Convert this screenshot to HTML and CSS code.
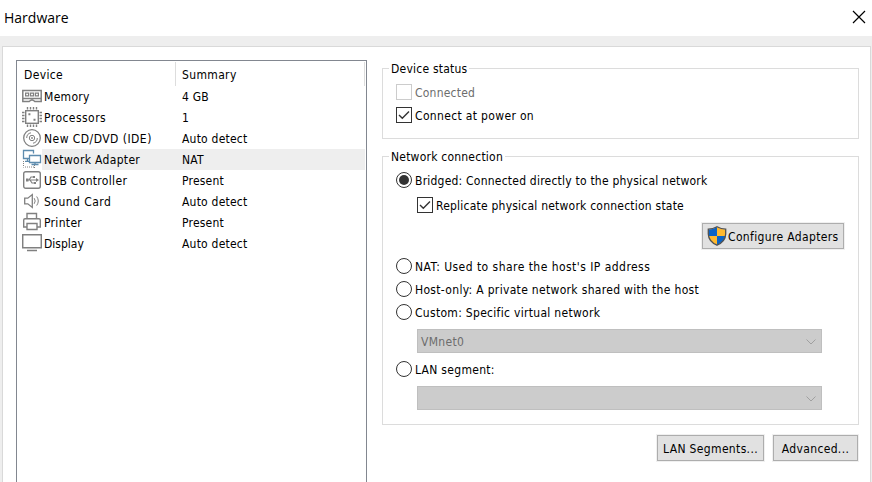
FILE: index.html
```html
<!DOCTYPE html>
<html lang="en">
<head>
<meta charset="utf-8">
<title>Hardware</title>
<link rel="stylesheet" href="styles.css">
</head>
<body>
<header class="titlebar"><h1>Hardware</h1>
<svg class="close" width="14" height="14" viewBox="0 0 14 14"><path d="M1 1l12 12M13 1L1 13"/></svg></header>
<main class="panel">
<section class="devices">
<div class="head"><span class="c1">Device</span><span class="c2">Summary</span></div>
<div class="row"><svg viewBox="0 0 20 20"><path d="M.8 4.5h18.4v11h-6.4q-2.8-3-5.6 0H.8zM1 12.5h18" stroke-width="1.5"/><path d="M3.6 7.1h3v2.8h-3zM8.5 7.1h3v2.8h-3zM13.4 7.1h3v2.8h-3z" stroke-width="1.2"/></svg><span class="name">Memory</span><span class="value">4 GB</span></div>
<div class="row"><svg viewBox="0 0 20 20"><rect x="3.7" y="3.7" width="12.6" height="12.6" stroke-width="1.4"/><path d="M5.5 0v2.5M8.5 0v2.5M11.5 0v2.5M14.5 0v2.5M5.5 17.5V20M8.5 17.5V20M11.5 17.5V20M14.5 17.5V20M0 5.5h2.5M0 8.5h2.5M0 11.5h2.5M0 14.5h2.5M17.5 5.5H20M17.5 8.5H20M17.5 11.5H20M17.5 14.5H20" stroke-width="1.4"/><path d="M6.4 7.3h2M11.5 12.7h2" stroke-width="2"/></svg><span class="name wide">Processors</span><span class="value">1</span></div>
<div class="row"><svg viewBox="0 0 20 20"><circle cx="10" cy="10" r="8.3" stroke-width="1.3"/><circle cx="10" cy="10" r="2.7"/><circle cx="10" cy="10" r=".6"/><path d="M4.7 10A5.3 5.3 0 0 1 9 4.8M15.3 10A5.3 5.3 0 0 1 11 15.2"/></svg><span class="name wide">New CD/DVD (IDE)</span><span class="value">Auto detect</span></div>
<div class="row selected"><svg viewBox="0 0 20 20"><g class="blue"><path d="M7 9.5H1.5v-8h10v3M3 12.3h4M5.5 9.5v3M7.5 6.5h11v7h-11zM9.5 15.5h7M13 13.5v2"/></g><path d="M1.5 12v6.5M3 18h9M12.5 16v3" stroke-dasharray="1 1"/></svg><span class="name">Network Adapter</span><span class="value">NAT</span></div>
<div class="row"><svg viewBox="0 0 20 20"><rect x="1.7" y="1.7" width="16.6" height="16.6" rx="2" stroke-width="1.4"/><path d="M4.5 10H15M7 10l2-3h2.5M8 10l2 3h2.5" stroke-width="1.2"/><path class="solid" d="M14 8l3 2-3 2zM4 8.5h2.5v3H4zM11 6h2v2h-2zM12 12h2v2h-2z"/></svg><span class="name">USB Controller</span><span class="value">Present</span></div>
<div class="row"><svg viewBox="0 0 20 20"><path d="M2.7 7.2h3.1l4.5-3.6v12.8l-4.5-3.6H2.7z" stroke-width="1.3"/><path d="M12.2 7.2q2 2.8 0 5.6M14.7 5.5q3.2 4.5 0 9"/></svg><span class="name wide">Sound Card</span><span class="value">Auto detect</span></div>
<div class="row"><svg viewBox="0 0 20 20"><path d="M5 6.5v-5h9.5v5M5 15H1.7V8q0-1.3 1.3-1.3h14q1.3 0 1.3 1.3v7H15M5 11.5h10v6H5z" stroke-width="1.4"/></svg><span class="name">Printer</span><span class="value">Present</span></div>
<div class="row"><svg viewBox="0 0 20 20"><path d="M.7 1.7h18.6v13H.7zM5 17.5h10" stroke-width="1.5"/></svg><span class="name tight">Display</span><span class="value">Auto detect</span></div>
</section>
<section class="settings">
<div class="group status"><h2 class="w-status">Device status</h2>
<div class="option disabled"><i class="check"></i><span class="w-connected">Connected</span></div>
<div class="option"><i class="check"><svg viewBox="0 0 16 16"><path d="M3 8l3.3 3.3L13 4.5"/></svg></i><span class="w-power">Connect at power on</span></div>
</div>
<div class="group network"><h2 class="w-network">Network connection</h2>
<div class="option"><i class="radio on"></i><span class="w-bridged">Bridged: Connected directly to the physical network</span></div>
<div class="option replicate"><i class="check"><svg viewBox="0 0 16 16"><path d="M3 8l3.3 3.3L13 4.5"/></svg></i><span class="w-replicate">Replicate physical network connection state</span></div>
<button class="configure"><svg width="20" height="20" viewBox="0 0 20 20"><path fill="#0b63c5" d="M10 1Q6 3.5 1.5 3.5V10H10z"/><path fill="#ffb92e" d="M10 1q4 2.5 8.5 2.5V10H10z"/><path fill="#ffb92e" d="M1.5 10H10v9Q3 16 1.5 10z"/><path fill="#0b63c5" d="M18.5 10H10v9q7-3 8.5-9z"/><path fill="none" stroke="#505050" stroke-width="1.3" d="M10 .8Q6 3.2 1.3 3.2V8Q1.5 15.5 10 19.2 18.5 15.5 18.7 8V3.2Q14 3.2 10 .8z"/></svg><span>Configure Adapters</span></button>
<div class="option"><i class="radio"></i><span class="w-nat">NAT: Used to share the host's IP address</span></div>
<div class="option"><i class="radio"></i><span class="w-host">Host-only: A private network shared with the host</span></div>
<div class="option"><i class="radio"></i><span class="w-custom">Custom: Specific virtual network</span></div>
<div class="select"><span>VMnet0</span><svg width="10" height="6" viewBox="0 0 10 6"><path d="M.5.5L5 5 9.5.5"/></svg></div>
<div class="option"><i class="radio"></i><span class="w-lan">LAN segment:</span></div>
<div class="select"><span></span><svg width="10" height="6" viewBox="0 0 10 6"><path d="M.5.5L5 5 9.5.5"/></svg></div>
</div>
<div class="actions"><button class="lan"><span>LAN Segments...</span></button><button class="advanced"><span>Advanced...</span></button></div>
</section>
</main>
</body>
</html>
```
FILE: styles.css
```css
* { box-sizing: border-box; }
body { margin: 0; height: 482px; overflow: hidden; background: #eee; color: #000; font: 12px/20px "DejaVu Sans Condensed", "DejaVu Sans", sans-serif; font-stretch: condensed; white-space: nowrap; letter-spacing: .22px; }
h1, h2 { margin: 0; font-weight: normal; }
svg { display: block; fill: none; flex: none; }
.titlebar { height: 36px; background: #fff; display: flex; justify-content: space-between; padding: 8px 6px 0 4px; }
h1 { font: 14px/20px "Open Sans", sans-serif; letter-spacing: 0; }
.close { margin-top: 2px; stroke: #000; stroke-width: 1.2; }
.panel { margin: 10px 1px 0 2px; height: 450px; border: 1px solid #d9d9d9; background: #fff; display: flex; padding: 13px 11px 0 13px; }
.devices { width: 351px; height: 440px; border: 1px solid #828790; flex: none; padding: 1px 1px 0 0; }
.head { height: 24px; display: flex; line-height: 26px; border-right: 1px solid #ddd; letter-spacing: .35px; }
.c1 { width: 159px; padding-left: 7px; border-right: 1px solid #ddd; }
.c2 { padding-left: 6px; }
.row { height: 21px; display: flex; line-height: 22px; align-items: stretch; }
.row svg { width: 20px; height: 20px; margin-left: 5px; stroke: #808080; }
.row .blue { stroke: #5e8cae; stroke-width: 1.3; }
.row .solid { fill: #808080; stroke: none; }
.name { width: 140px; padding-left: 2px; letter-spacing: .32px; }
.name.wide { letter-spacing: .46px; }
.name.tight { letter-spacing: 0; }
.value { flex: 1; }
.selected .name, .selected .value { background: #eee; }
.settings { margin-left: 15px; padding-top: 8px; width: 477px; flex: none; }
.group { border: 1px solid #dcdcdc; padding-left: 13px; }
.status { height: 71px; }
.network { height: 269px; margin-top: 17px; }
h2 { width: max-content; height: 20px; margin: -10px 0 0 -7px; padding: 0 2px; background: #fff; font-size: inherit; line-height: 20px; }
.option { display: flex; height: 16px; line-height: 16px; margin-bottom: 7px; }
.option span { padding-left: 3px; line-height: 18px; }
.w-power { letter-spacing: .34px; }
.w-nat { letter-spacing: .46px; }
.w-host { letter-spacing: .32px; }
.w-custom, .w-lan { letter-spacing: .3px; }
.status h2 + .option { margin-top: 5px; }
.network h2 + .option { margin: 5px 0 9px; }
.check, .radio { width: 16px; height: 16px; border: 1px solid #333; flex: none; }
.check svg { width: 16px; height: 16px; margin: -1px; stroke: #333; stroke-width: 1.4; }
.radio { border-radius: 50%; }
.on { padding: 2px; }
.on::before { content: ""; display: block; width: 10px; height: 10px; border-radius: 50%; background: #333; }
.disabled { color: #6d6d6d; }
.disabled .check { border-color: #ccc; }
.replicate { margin: 0 0 10px 21px; }
button { height: 26px; border: 1px solid #adadad; background: #e1e1e1; box-shadow: 0 0 0 1px #f0f0f0; padding: 1px 0 0; font: inherit; color: #000; display: flex; justify-content: center; align-items: center; letter-spacing: .35px; }
.configure { width: 142px; margin: 0 0 9px 306px; justify-content: flex-start; padding-left: 4px; }
.configure svg { margin-top: -1px; }
.configure span { margin-left: 1px; }
.select { width: 405px; height: 24px; border: 1px solid #bfbfbf; background: #ccc; margin: 9px 0 8px 21px; padding: 1px 5px 0 3px; display: flex; justify-content: space-between; align-items: center; color: #6d6d6d; letter-spacing: .3px; }
.select svg { stroke: #a0a0a0; }
.actions { display: flex; justify-content: flex-end; gap: 9px; margin: 10px 1px 0 0; }
.lan { width: 107px; }
.advanced { width: 85px; }
```
